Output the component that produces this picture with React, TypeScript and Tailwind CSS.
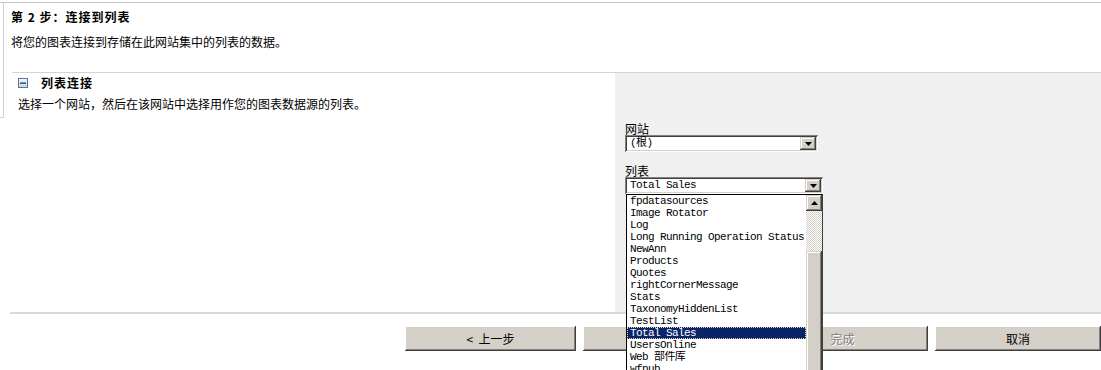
import React from "react";

const cjk = "font-['Noto_Sans_CJK_SC','Noto_Sans',sans-serif]";
const mono = "font-['Liberation_Mono','Noto_Sans_CJK_SC',monospace]";
const raised =
  "bg-[#d4d0c8] shadow-[inset_-1px_-1px_#404040,inset_1px_1px_#ffffff,inset_-2px_-2px_#808080,inset_2px_2px_#d4d0c8]";
const raisedArrow =
  "bg-[#d4d0c8] shadow-[inset_-1px_-1px_#404040,inset_1px_1px_#d4d0c8,inset_-2px_-2px_#808080,inset_2px_2px_#ffffff]";
const sunken =
  "bg-white shadow-[inset_1px_1px_#808080,inset_-1px_-1px_#ffffff,inset_2px_2px_#404040,inset_-2px_-2px_#d4d0c8]";

const LIST_ITEMS = [
  "fpdatasources",
  "Image Rotator",
  "Log",
  "Long Running Operation Status",
  "NewAnn",
  "Products",
  "Quotes",
  "rightCornerMessage",
  "Stats",
  "TaxonomyHiddenList",
  "TestList",
  "Total Sales",
  "UsersOnline",
  "Web 部件库",
  "wfpub",
];

function DownArrow() {
  return (
    <svg width="7" height="4" viewBox="0 0 7 4">
      <polygon points="0,0 7,0 3.5,4" fill="#000" />
    </svg>
  );
}

function UpArrow() {
  return (
    <svg width="7" height="4" viewBox="0 0 7 4">
      <polygon points="0,4 7,4 3.5,0" fill="#000" />
    </svg>
  );
}

function SelectBox({ value, width }: { value: string; width: string }) {
  return (
    <div className={`${sunken} ${width} h-[17px] flex items-stretch p-[2px]`}>
      <div className={`${mono} flex-1 text-[11px] tracking-[-0.6px] leading-[13px] pl-[3px] text-black whitespace-nowrap`}>
        {value}
      </div>
      <div className={`${raisedArrow} w-[16px] flex items-center justify-center`}>
        <DownArrow />
      </div>
    </div>
  );
}

export default function App() {
  return (
    <div className={`${cjk} relative w-[1101px] h-[370px] overflow-hidden bg-white text-black pt-[2px]`}>
      <div className="border-t border-[#c6c6c6] flex">
        {/* left frame stub */}
        <div className="w-[4px] h-[115px] shrink-0 border-r border-b border-[#d0d0d0]" />

        <div className="flex-1 flex flex-col">
          {/* Step header */}
          <div className="pl-[7px] pt-[6px]">
            <div className="text-[12px] leading-[16px] font-bold tracking-[1px]">第 2 步：连接到列表</div>
            <div className="text-[12px] leading-[16px] mt-[9px]">将您的图表连接到存储在此网站集中的列表的数据。</div>
          </div>

          <div className="ml-[8px] mt-[22px] h-px bg-[#d4d4d4]" />

          {/* Section */}
          <div className="ml-[8px] flex h-[239px]">
            <div className="w-[603px] shrink-0 pl-[6px] pt-[2px]">
              <div className="flex items-center h-[16px]">
                <svg width="10" height="10" viewBox="0 0 10 10">
                  <defs>
                    <linearGradient id="cg" x1="0" y1="0" x2="0" y2="1">
                      <stop offset="0" stopColor="#f4f7fb" />
                      <stop offset="1" stopColor="#c9d6e6" />
                    </linearGradient>
                  </defs>
                  <rect x="0.5" y="0.5" width="9" height="9" fill="url(#cg)" stroke="#5c7393" />
                  <rect x="2" y="4.5" width="6" height="1.3" fill="#1e3a66" />
                </svg>
                <span className="ml-[13px] text-[12px] font-bold tracking-[1px] leading-[16px]">列表连接</span>
              </div>
              <div className="text-[12px] leading-[16px] mt-[5px]">选择一个网站，然后在该网站中选择用作您的图表数据源的列表。</div>
            </div>

            <div className="flex-1 bg-[#f0f0f0] pl-[10px] pt-[50px] flex flex-col">
              <div className="text-[12px] leading-[12px]">网站</div>
              <SelectBox value="(根)" width="w-[193px]" />
              <div className="text-[12px] leading-[12px] mt-[13px]">列表</div>
              <div className="relative w-[198px]">
                <SelectBox value="Total Sales" width="w-[198px]" />

                {/* open dropdown list */}
                <div className="absolute left-[1px] top-[17px] w-[197px] h-[200px] flex bg-white border-l border-t border-black border-r border-r-[#404040] z-10">
                  <div className={`${mono} w-[179px] text-[11px] tracking-[-0.6px]`}>
                    {LIST_ITEMS.map((item) => (
                      <div
                        key={item}
                        className={`h-[12px] leading-[12px] pl-[3px] whitespace-nowrap overflow-hidden ${
                          item === "Total Sales"
                            ? "bg-[#0a246a] text-white outline-1 outline-dotted outline-[#e8dca0] -outline-offset-1"
                            : "text-black"
                        }`}
                      >
                        {item}
                      </div>
                    ))}
                  </div>
                  <div className="w-[16px] flex flex-col">
                    <div className={`${raisedArrow} h-[16px] flex items-center justify-center`}>
                      <UpArrow />
                    </div>
                    <div className="h-[40px] bg-[repeating-conic-gradient(#d4d0c8_0_25%,#ffffff_0_50%)] bg-[length:2px_2px]" />
                    <div className={`${raisedArrow} flex-1`} />
                  </div>
                </div>
              </div>
            </div>
          </div>
        </div>
      </div>

      <div className="ml-[10px] h-[2px] bg-[#d9d9d9]" />

      {/* Wizard buttons */}
      <div className="flex mt-[12px] pl-[405px]">
        <button className={`${raised} w-[171px] h-[25px] text-[12px] leading-[25px]`}>&lt;&nbsp;&nbsp;上一步</button>
        <button className={`${raised} w-[171px] h-[25px] text-[12px] ml-[7px]`}>下一步 &gt;</button>
        <button className={`${raised} w-[171px] h-[25px] text-[12px] ml-[3px] text-[#808080] [text-shadow:1px_1px_0_#ffffff]`}>
          完成
        </button>
        <button className={`${raised} w-[166px] h-[25px] text-[12px] ml-[7px]`}>取消</button>
      </div>
    </div>
  );
}
